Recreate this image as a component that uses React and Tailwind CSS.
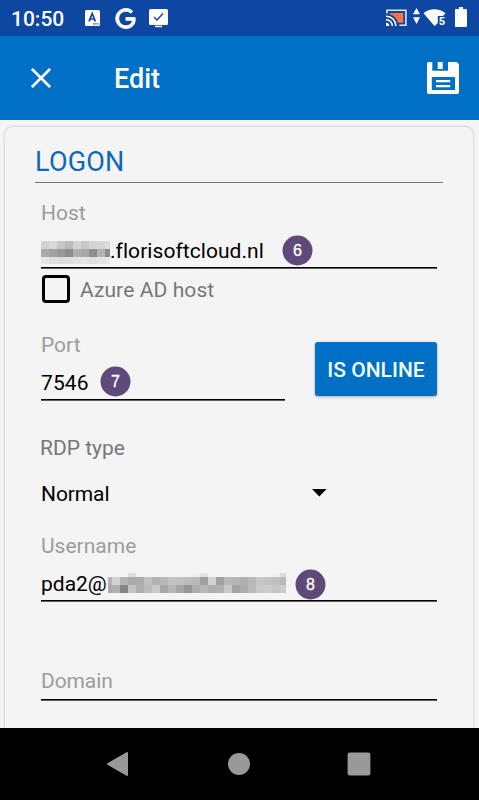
const HOST_MASK = [
  [8, ['#d2d2d2', '#dadada', '#c8c8c8', '#bcbcbc', '#d3d3d3', '#c8c8c8', '#d4d4d4', '#d6d6d6', '#dcdcdc']],
  [8, ['#aaaaaa', '#a2a2a2', '#989898', '#8c8c8c', '#aeaeae', '#a8a8a8', '#8f8f8f', '#b2b2b2', '#8c8c8c']],
  [7, ['#e7e7e7', '#dedede', '#dcdcdc', '#dfdfdf', '#e2e2e2', '#e5e5e5', '#e0e0e0', '#e4e4e4', '#e8e8e8']],
];
const HOST_COLS = [8, 8, 8, 8, 8, 8, 8, 8, 5];

const N = '#f4f4f4';
const USER_MASK = [
  [4, [N, N, N, '#dddddd', N, N, N, N, N, N, N, '#f0f0f0', '#e3e3e3', N, N, N, N, N, N, N, N, '#f0f0f0', '#dcdcdc']],
  [8, ['#b3b3b3', '#d3d3d3', '#b4b4b4', '#aaaaaa', '#acacac', '#c0c0c0', '#b3b3b3', '#b9b9b9', '#c3c3c3', '#c1c1c1', '#bdbdbd', '#b8b8b8', '#a0a0a0', '#d2d2d2', '#a0a0a0', '#b8b8b8', '#b5b5b5', '#b0b0b0', '#b8b8b8', '#c6c6c6', '#c4c4c4', '#c0c0c0', '#b9b9b9']],
  [8, ['#aaaaaa', '#b0b0b0', '#858585', '#c2c2c2', '#aeaeae', '#bdbdbd', '#cacaca', '#a8a8a8', '#b7b7b7', '#a7a7a7', '#969696', '#adadad', '#b7b7b7', '#afafaf', '#b0b0b0', '#c9c9c9', '#a4a4a4', '#acacac', '#bababa', '#c9c9c9', '#cdcdcd', '#c6c6c6', '#cbcbcb']],
];
const USER_COLS = [4, ...Array(21).fill(8), 6];

function Mosaic({ rows, cols }) {
  return (
    <div className="shrink-0">
      {rows.map(([h, cells], r) => (
        <div key={r} className="flex">
          {cells.map((c, i) => (
            <div key={i} style={{ width: cols[i], height: h, background: c }} />
          ))}
        </div>
      ))}
    </div>
  );
}

function Badge({ n, className }) {
  return (
    <span className={`absolute flex h-[30px] w-[30px] translate-x-[0.5px] translate-y-[0.5px] items-center justify-center rounded-full bg-[#5f497a] font-['Liberation_Sans',sans-serif] text-base leading-none text-white [-webkit-text-stroke:0.3px_white] ${className}`}>
      {n}
    </span>
  );
}

function StatusBar() {
  return (
    <div className="flex h-9 shrink-0 items-start bg-[#0d47a1] text-white">
      <span className="ml-[11px] mt-[7px] w-[74px] text-[21px] font-medium leading-6">10:50</span>
      <svg className="mt-[10px]" width="15" height="16" viewBox="0 0 15 16">
        <rect width="15" height="16" rx="1.5" fill="#fff" />
        <path d="M4 11.5 7.2 3.5 10.4 11.5M5.1 9h4.2" fill="none" stroke="#0d47a1" strokeWidth="1.7" />
        <path d="M8 13.2h1.4v1.4H8zM10.2 13.2h1.4v1.4h-1.4zM12.4 13.2h1.4v1.4h-1.4z" fill="#0d47a1" />
      </svg>
      <svg className="ml-[15px] mt-2" width="21" height="21" viewBox="-.6 -.6 25.2 25.2">
        <path fill="#fff" stroke="#fff" strokeWidth="1.1" d="M12.48 10.92v3.28h7.84c-.24 1.84-.853 3.187-1.787 4.133-1.147 1.147-2.933 2.4-6.053 2.4-4.827 0-8.6-3.893-8.6-8.72s3.773-8.72 8.6-8.72c2.6 0 4.507 1.027 5.907 2.347l2.307-2.307C18.747 1.44 16.133 0 12.48 0 5.867 0 .307 5.387.307 12s5.56 12 12.173 12c3.573 0 6.267-1.173 8.373-3.36 2.16-2.16 2.84-5.213 2.84-7.667 0-.76-.053-1.467-.173-2.053H12.48z" />
      </svg>
      <svg className="ml-[13px] mt-[9px]" width="19" height="19" viewBox="0 0 19 19">
        <rect width="19" height="16" rx="1.5" fill="#fff" />
        <path d="M6 16.7h7v1.5H6z" fill="#fff" />
        <path d="m5 8 3 3 6-6.5" fill="none" stroke="#0d47a1" strokeWidth="1.4" />
      </svg>
      <svg className="ml-auto mt-[9px]" width="21" height="17" viewBox="0 0 21 17">
        <path d="M3.800 4h13.500v9.800h-5.300A12 12 0 0 0 3.800 5.200z" fill="#ff7043" />
        <path d="M.9 4.500V1.200h19v15.100h-6.500" fill="none" stroke="#dce6f5" strokeWidth="1.600" />
        <path d="M0 7.200A9.500 9.500 0 0 1 9.800 17M0 10.700A6 6 0 0 1 6.300 17" fill="none" stroke="#fff" strokeWidth="1.500" />
        <path d="M0 13.700A3 3 0 0 1 3.200 17H0z" fill="#fff" />
      </svg>
      <svg className="ml-[6px] mt-2" width="7" height="16" viewBox="0 0 7 16">
        <path d="M3.500 0 7 6.300H0zM3.500 16 7 9.300H0z" fill="#fff" />
      </svg>
      <svg className="ml-[3px] mt-[9px]" width="24" height="18" viewBox="0 0 24 18">
        <path d="M.5 4.200C6.500-1 16-1 22.500 4.200L20 7h-5.200v7L11.500 17z" fill="#fff" />
        <text x="15.800" y="15.800" fontSize="11" fontWeight="700" fill="#fff">5</text>
      </svg>
      <svg className="ml-2 mr-3 mt-[7px]" width="12" height="20" viewBox="0 0 12 20">
        <path d="M4 0h4v2h3.200q.8 0 .8.800V19.200q0 .8-.8.800H.8q-.8 0-.8-.8V2.800Q0 2 .8 2H4z" fill="#fff" />
      </svg>
    </div>
  );
}

function AppBar() {
  return (
    <div className="flex h-[84px] shrink-0 items-center bg-[#006fc6] text-[#fffff5]">
      <svg className="ml-[31px]" width="20" height="20" viewBox="0 0 20 20">
        <path d="M.9.900 19.100 19.100M19.100.900.900 19.100" stroke="currentColor" strokeWidth="2.700" />
      </svg>
      <h1 className="ml-[63px] mt-[2px] text-[27px] font-medium leading-8">Edit</h1>
      <svg className="ml-auto mr-5" width="32" height="32" viewBox="0 0 32 32">
        <path fill="currentColor" fillRule="evenodd" d="M1.500 0H5.300V8.800H21V0H29.800L32 2.200V30.300q0 1.700-1.700 1.700H1.700Q0 32 0 30.300V1.500Q0 0 1.500 0zM4.800 15V28H28V15z" />
        <path fill="currentColor" d="M10.700 0h5v7h-5zM9 18h14.200v2.200H9zM9 23h14.200v2.200H9z" />
      </svg>
    </div>
  );
}

function Underline() {
  return <div className="h-0.5 w-full border-b border-[#5c5c5c] bg-black" />;
}

export default function App() {
  return (
    <div className="flex h-[800px] w-[479px] flex-col overflow-hidden bg-[#f5f5f5] font-[Roboto,sans-serif] text-[21px] leading-6 text-black">
      <StatusBar />
      <AppBar />
      <main className="flex min-h-0 flex-1 flex-col overflow-hidden pl-[5px] pr-[6px] pt-[7px]">
        <section className="h-[640px] shrink-0 rounded-lg bg-[#f4f4f4] pl-[30px] pr-[30px] pt-[19px] shadow-[0_0_3px_rgba(0,0,0,0.28)]">
          <h2 className="h-9 text-[27px] leading-8 tracking-[0.2px] text-[#0d69b8]">LOGON</h2>
          <div className="h-px bg-[#757575]" />
          <div className="ml-1.5 mr-1.5">
            <label className="mt-[18px] block h-[38px] text-[#9c9c9c]">Host</label>
            <div className="relative flex h-7 items-start">
              <div className="mt-0.5"><Mosaic rows={HOST_MASK} cols={HOST_COLS} /></div>
              <span className="tracking-[0.06px]">.florisoftcloud.nl</span>
              <Badge n="6" className="left-[241px] top-[-4px]" />
            </div>
            <Underline />
            <div className="mt-1.5 flex h-7 items-start">
              <span className="ml-px h-7 w-7 rounded-[4px] border-[3px] border-black" />
              <span className="ml-[10px] mt-[3px] tracking-[0.1px] text-[#777]">Azure AD host</span>
            </div>
            <div className="mt-[30px] flex h-[68px] justify-between">
              <div className="w-[244px]">
                <label className="block h-[38px] text-[#9c9c9c]">Port</label>
                <div className="relative h-7 tracking-[0.1px]">
                  7546
                  <Badge n="7" className="left-[59px] top-[-5px]" />
                </div>
                <Underline />
              </div>
              <button className="mt-[9px] h-[54px] w-[122px] rounded-[3px] bg-[#006fc6] pt-[2px] font-medium text-[#f4fffa] shadow-[0_1px_3px_rgba(0,0,0,0.3)]">IS ONLINE</button>
            </div>
            <div className="-ml-px mt-[35px] h-[46px] text-[#777]">RDP type</div>
            <div className="flex h-[52px] w-[286px] items-start justify-between">
              <span className="tracking-[-0.1px]">Normal</span>
              <svg className="mt-[7px]" width="15" height="8" viewBox="0 0 15 8"><path d="M0 0h14.600L7.300 7.500z" /></svg>
            </div>
            <label className="block h-[38px] text-[#9c9c9c]">Username</label>
            <div className="relative flex h-7 items-start">
              <span className="w-[67px]">pda2@</span>
              <div className="mt-px"><Mosaic rows={USER_MASK} cols={USER_COLS} /></div>
              <Badge n="8" className="left-[254px] top-[-3px]" />
            </div>
            <Underline />
            <div className="mt-[67px] h-[30px] tracking-[-0.1px] text-[#9c9c9c]">Domain</div>
            <Underline />
          </div>
        </section>
      </main>
      <nav className="flex h-[72px] shrink-0 items-center bg-black">
        <svg className="ml-[107px]" width="21" height="24" viewBox="0 0 21 24">
          <path d="M1 12 20 1V23z" fill="#999" stroke="#999" strokeWidth="2" strokeLinejoin="round" />
        </svg>
        <span className="ml-[100px] h-[22px] w-[22px] rounded-full bg-[#999]" />
        <svg className="ml-[97px]" width="24" height="24" viewBox="0 0 24 24">
          <rect x=".6" y=".6" width="22.800" height="22.800" rx="2.200" fill="#999" />
        </svg>
      </nav>
    </div>
  );
}
